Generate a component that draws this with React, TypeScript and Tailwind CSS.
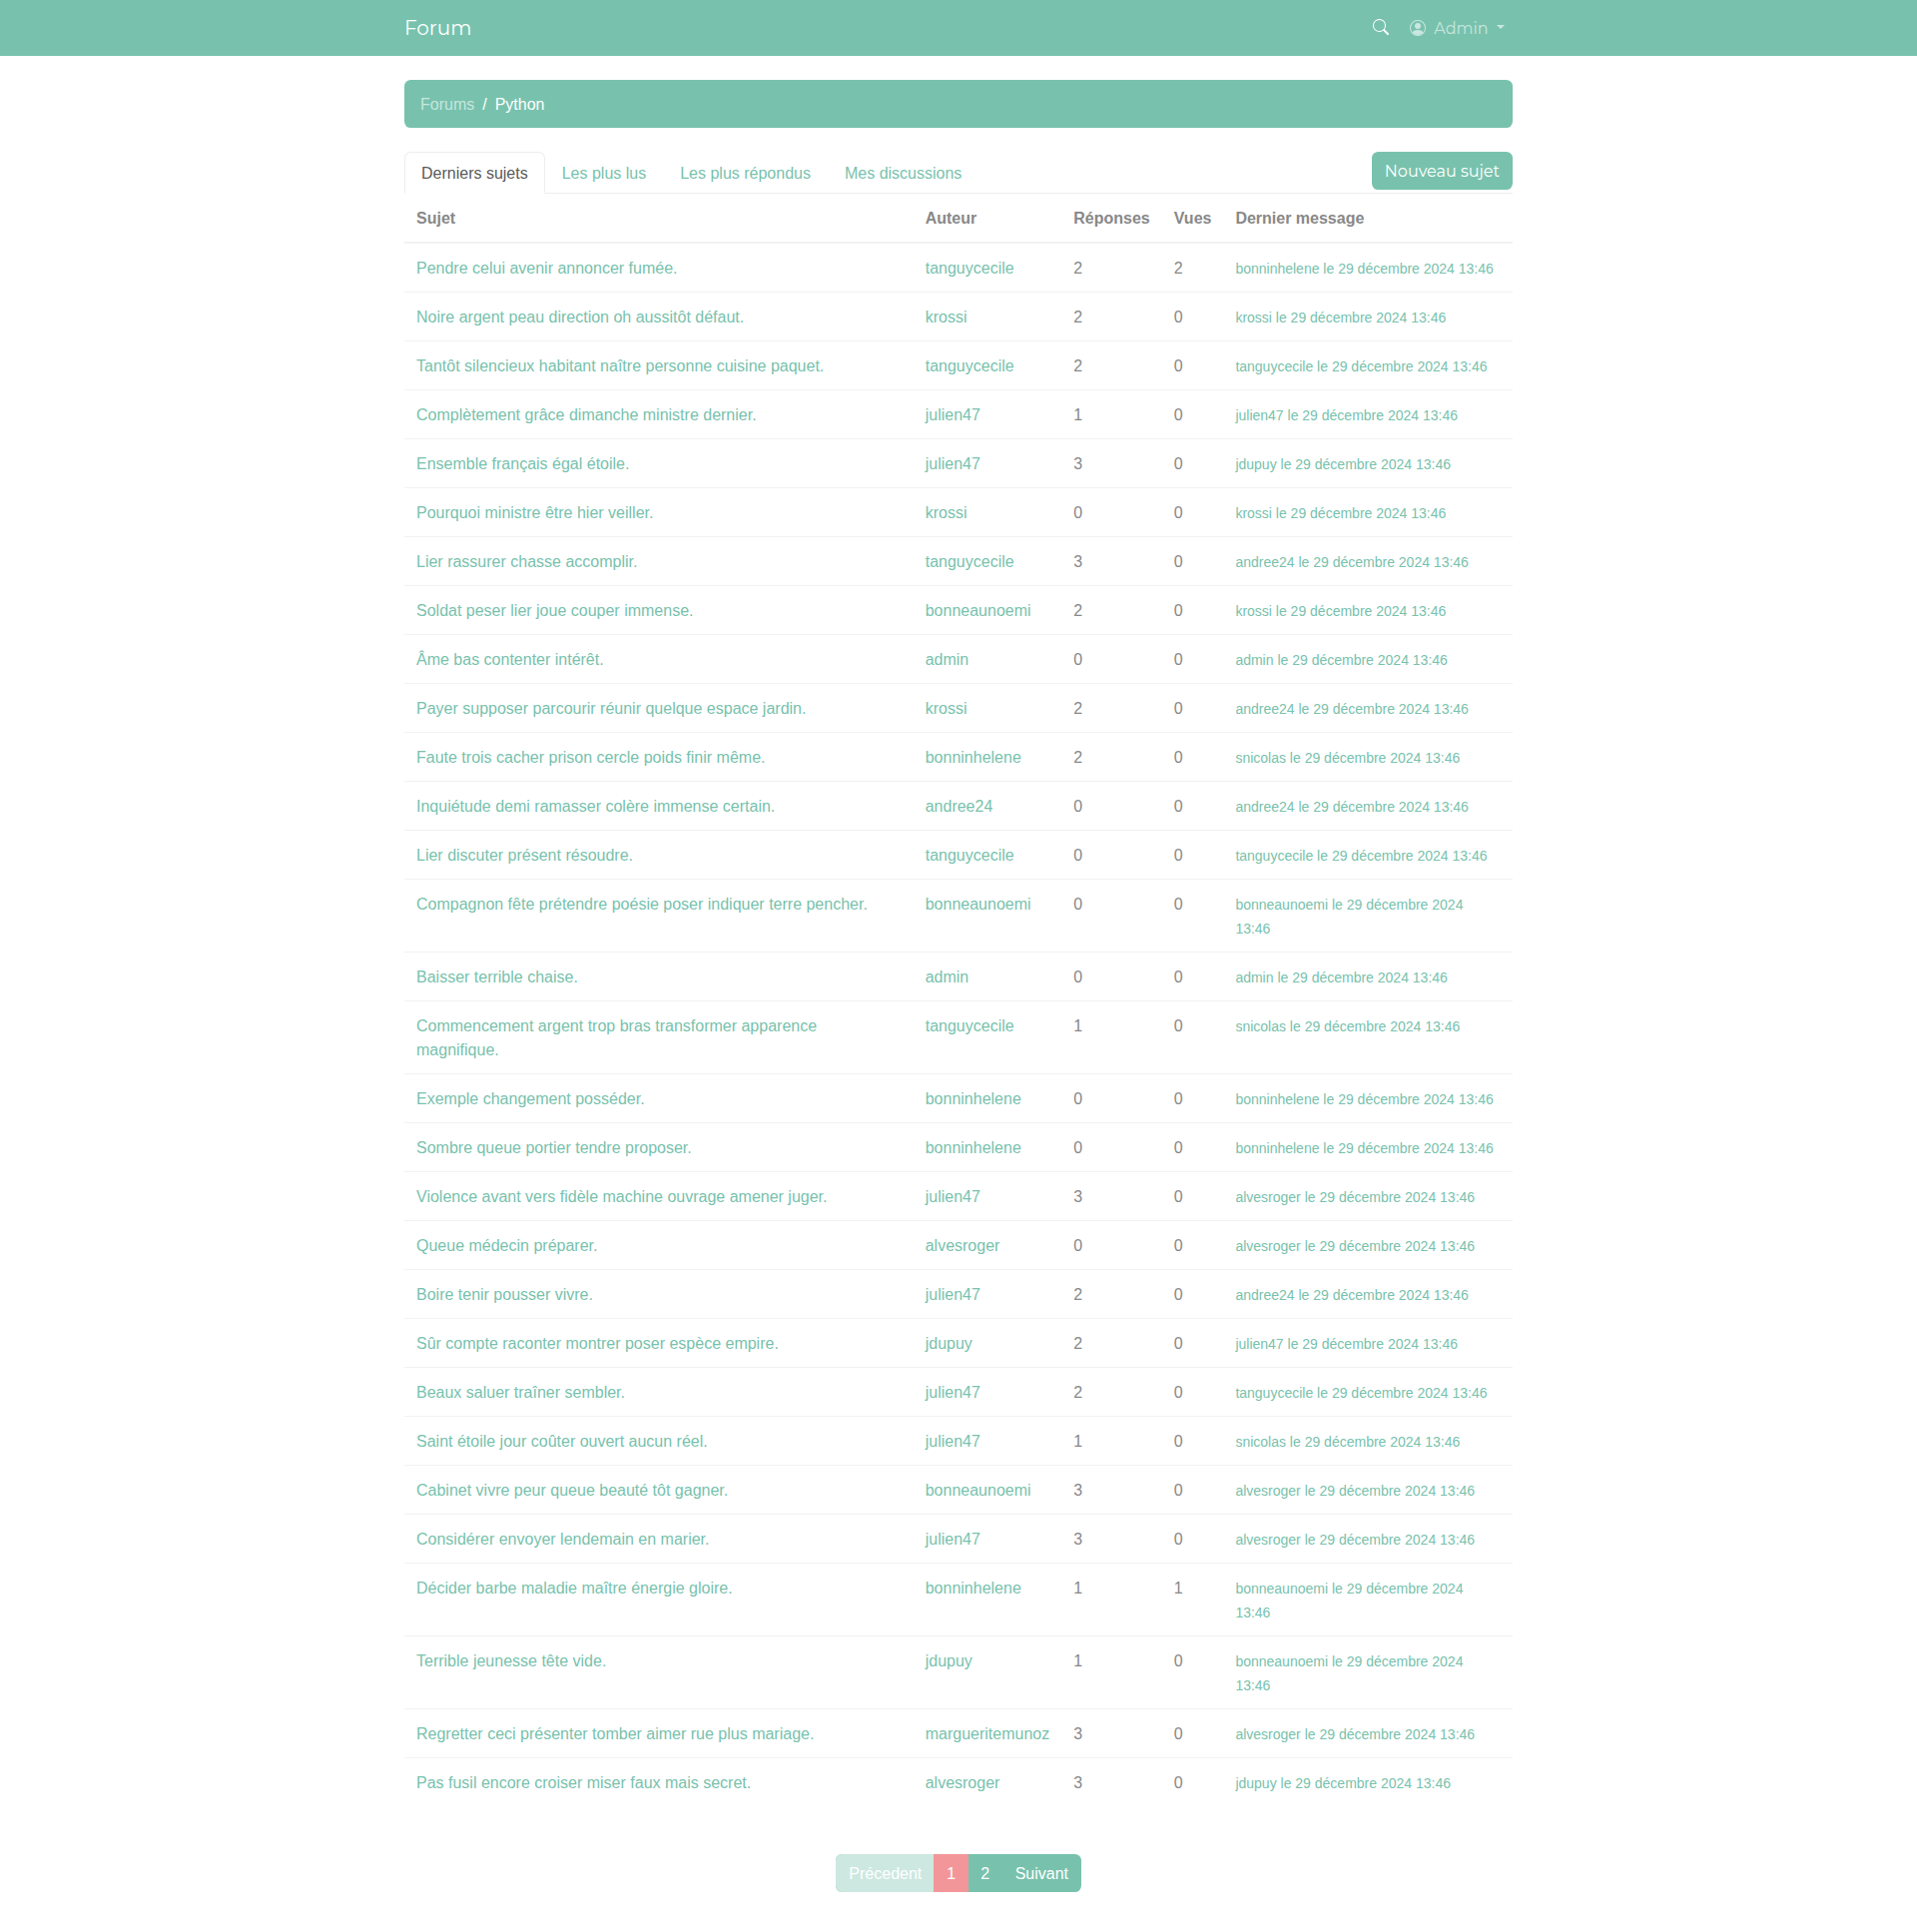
import React from "react";

const data = `Pendre celui avenir annoncer fumée.|tanguycecile|2|2|bonninhelene
Noire argent peau direction oh aussitôt défaut.|krossi|2|0|krossi
Tantôt silencieux habitant naître personne cuisine paquet.|tanguycecile|2|0|tanguycecile
Complètement grâce dimanche ministre dernier.|julien47|1|0|julien47
Ensemble français égal étoile.|julien47|3|0|jdupuy
Pourquoi ministre être hier veiller.|krossi|0|0|krossi
Lier rassurer chasse accomplir.|tanguycecile|3|0|andree24
Soldat peser lier joue couper immense.|bonneaunoemi|2|0|krossi
Âme bas contenter intérêt.|admin|0|0|admin
Payer supposer parcourir réunir quelque espace jardin.|krossi|2|0|andree24
Faute trois cacher prison cercle poids finir même.|bonninhelene|2|0|snicolas
Inquiétude demi ramasser colère immense certain.|andree24|0|0|andree24
Lier discuter présent résoudre.|tanguycecile|0|0|tanguycecile
Compagnon fête prétendre poésie poser indiquer terre pencher.|bonneaunoemi|0|0|bonneaunoemi
Baisser terrible chaise.|admin|0|0|admin
Commencement argent trop bras transformer apparence magnifique.|tanguycecile|1|0|snicolas
Exemple changement posséder.|bonninhelene|0|0|bonninhelene
Sombre queue portier tendre proposer.|bonninhelene|0|0|bonninhelene
Violence avant vers fidèle machine ouvrage amener juger.|julien47|3|0|alvesroger
Queue médecin préparer.|alvesroger|0|0|alvesroger
Boire tenir pousser vivre.|julien47|2|0|andree24
Sûr compte raconter montrer poser espèce empire.|jdupuy|2|0|julien47
Beaux saluer traîner sembler.|julien47|2|0|tanguycecile
Saint étoile jour coûter ouvert aucun réel.|julien47|1|0|snicolas
Cabinet vivre peur queue beauté tôt gagner.|bonneaunoemi|3|0|alvesroger
Considérer envoyer lendemain en marier.|julien47|3|0|alvesroger
Décider barbe maladie maître énergie gloire.|bonninhelene|1|1|bonneaunoemi
Terrible jeunesse tête vide.|jdupuy|1|0|bonneaunoemi
Regretter ceci présenter tomber aimer rue plus mariage.|margueritemunoz|3|0|alvesroger
Pas fusil encore croiser miser faux mais secret.|alvesroger|3|0|jdupuy`;

const topics = data.split("\n").map((line) => {
  const [title, author, replies, views, last] = line.split("|");
  return { title, author, replies, views, last };
});

const grid = "grid grid-cols-[509.7px_148.6px_100.5px_61.6px_289.6px]";
const cell = "px-3 pt-[13px] pb-[11px]";
const tab = "px-[17px] pt-[10px]";

export default function App() {
  return (
    <div className="min-h-[1935px] bg-white font-[Arial,'Liberation_Sans',sans-serif] text-base leading-6 text-[#888]">
      <nav className="h-14 bg-[#78c2ad] font-['Montserrat','Inter',sans-serif]">
        <div className="mx-auto flex h-full w-[1110px] items-center justify-between">
          <a className="text-[20px] leading-[30px] text-white">Forum</a>
          <div className="flex items-center pr-2">
            <svg className="mr-[21px] mb-0.5 size-4 text-white" viewBox="0 0 16 16" fill="currentColor">
              <path d="M11.742 10.344a6.5 6.5 0 1 0-1.397 1.398h-.001c.03.04.062.078.098.115l3.85 3.85a1 1 0 0 0 1.415-1.414l-3.85-3.85a1.007 1.007 0 0 0-.115-.1zM12 6.5a5.5 5.5 0 1 1-11 0 5.5 5.5 0 0 1 11 0z" />
            </svg>
            <a className="flex items-center text-white/60">
              <svg className="mr-2 size-4" viewBox="0 0 16 16" fill="currentColor">
                <path d="M13.468 12.37C12.758 11.226 11.195 10 8 10s-4.757 1.225-5.468 2.37A6.987 6.987 0 0 0 8 15a6.987 6.987 0 0 0 5.468-2.63z" />
                <path fillRule="evenodd" d="M8 9a3 3 0 1 0 0-6 3 3 0 0 0 0 6z" />
                <path fillRule="evenodd" d="M8 1a7 7 0 1 0 0 14A7 7 0 0 0 8 1zM0 8a8 8 0 1 1 16 0A8 8 0 0 1 0 8z" />
              </svg>
              <span className="pt-0.5">Admin</span>
              <span className="mb-0.5 ml-[8.4px] border-x-[4.8px] border-t-[4.8px] border-x-transparent border-t-current" />
            </a>
          </div>
        </div>
      </nav>

      <main className="mx-auto w-[1110px] pt-6">
        <div className="mb-6 flex h-12 items-center gap-2 rounded-[6.4px] bg-[#78c2ad] px-4 pt-0.5 text-white">
          <a className="text-white/60">Forums</a>
          <span>/</span>
          <span>Python</span>
        </div>

        <div className="flex h-[42px] items-start justify-between border-b border-[#eceeef]">
          <div className="flex text-[#78c2ad]">
            <a className="h-[42px] rounded-t-[6.4px] border border-[#eceeef] border-b-white bg-white px-4 pt-[9px] text-[#5a5a5a]">Derniers sujets</a>
            <a className={tab}>Les plus lus</a>
            <a className={tab}>Les plus répondus</a>
            <a className={tab}>Mes discussions</a>
          </div>
          <button className="h-[38px] rounded-[6.4px] bg-[#78c2ad] px-[13px] pt-0.5 font-['Montserrat','Inter',sans-serif] text-white">
            Nouveau sujet
          </button>
        </div>

        <div className={grid + " border-b-2 border-black/5 font-bold"}>
          {["Sujet", "Auteur", "Réponses", "Vues", "Dernier message"].map((h) => (
            <div key={h} className={cell}>{h}</div>
          ))}
        </div>
        {topics.map((t, i) => (
          <div key={i} className={grid + " border-b border-black/5 last-of-type:border-transparent"}>
            <a className={cell + " text-[#78c2ad]"}>{t.title}</a>
            <a className={cell + " text-[#78c2ad]"}>{t.author}</a>
            <div className={cell}>{t.replies}</div>
            <div className={cell}>{t.views}</div>
            <div className={cell}>
              <a className="text-sm/6 text-[#78c2ad]">{t.last} le 29 décembre 2024 13:46</a>
            </div>
          </div>
        ))}

        <nav className="mt-[47px] flex justify-center text-white">
          <div className="flex h-[38px] overflow-hidden rounded-[6.4px] bg-[#78c2ad]">
            <a className="bg-[#cce8e0] py-2 pr-[11.6px] pl-[13.4px]">Précedent</a>
            <a className="bg-[#f3969a] py-2 pr-[12.6px] pl-[13.4px]">1</a>
            <a className="py-2 pr-[12.6px] pl-[12.4px]">2</a>
            <a className="px-[13px] py-2">Suivant</a>
          </div>
        </nav>
      </main>
    </div>
  );
}
